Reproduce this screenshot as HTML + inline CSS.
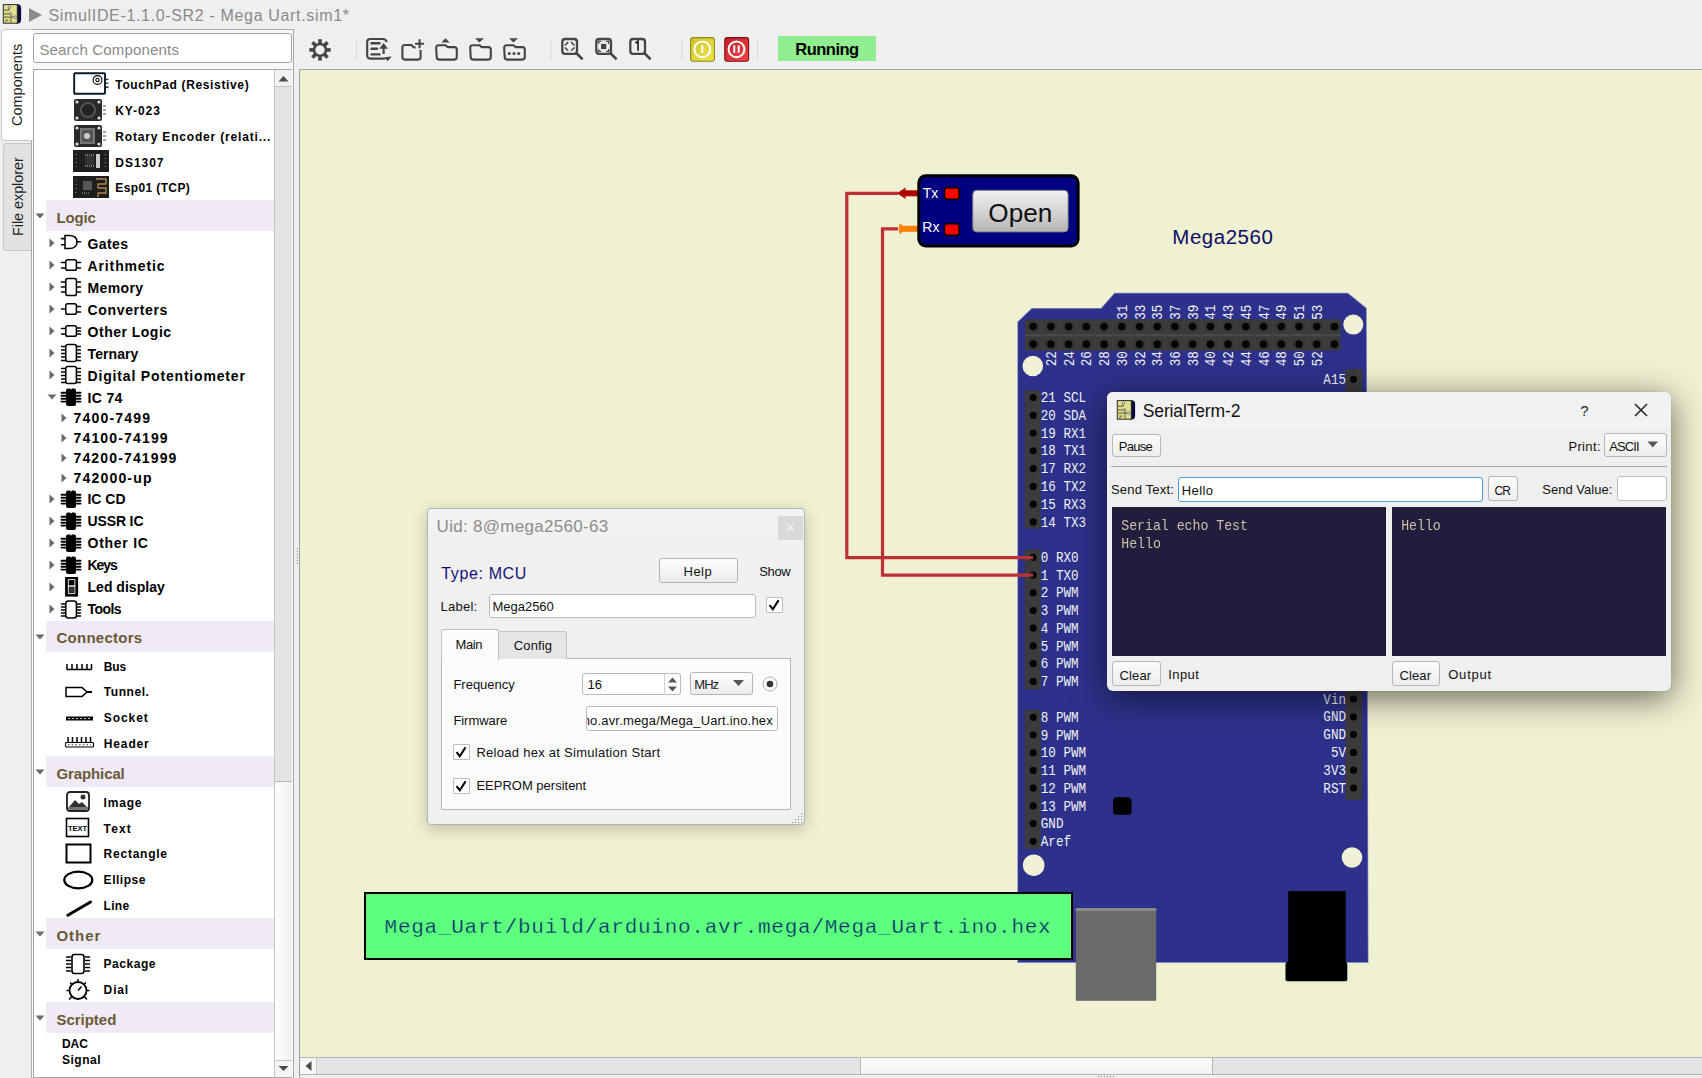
<!DOCTYPE html>
<html><head><meta charset="utf-8"><title>SimulIDE</title>
<style>
*{box-sizing:border-box;margin:0;padding:0}
html,body{width:1702px;height:1078px;overflow:hidden;background:#efefef;font-family:"Liberation Sans",sans-serif;color:#000}
.a{position:absolute}
.t{position:absolute;white-space:nowrap;line-height:1}
svg.a{overflow:visible}
</style></head><body>
<div class="a" style="left:0px;top:0px;width:1702px;height:29px;background:#efefef"></div>
<svg class="a" style="left:0px;top:0px;" width="24" height="26" viewBox="0 0 24 26"><path d="M16 4.2 h1.8 q3.3 0 3.3 4 v11 q0 4.3-3.3 4.3 h-1.8z" fill="#0a0838"/>
<rect x="3.3" y="4.6" width="14" height="18.6" fill="#e2e08e" stroke="#2a2a2a" stroke-width="1"/>
<path d="M3.5 10.1h5.6v-3.2 M3.5 13.9h7 M3.5 17.2h11.2 M6 22.5v-2.3h2.5 M11 14v9" fill="none" stroke="#77764a" stroke-width="1.2"/>
<circle cx="9.4" cy="7" r="1.3" fill="#fff" stroke="#555" stroke-width="0.7"/><circle cx="10.7" cy="13.9" r="1.3" fill="#ddd" stroke="#555" stroke-width="0.7"/><circle cx="15" cy="17.2" r="1.3" fill="#fff" stroke="#555" stroke-width="0.7"/></svg>
<svg class="a" style="left:28px;top:7px;" width="16" height="16" viewBox="0 0 16 16"><path d="M1 1 L14 8 L1 15z" fill="#8c8c8c"/></svg>
<div class="t" style="left:48.50px;top:7.70px;font-size:16px;color:#8a8a8a;letter-spacing:0.657px;">SimulIDE-1.1.0-SR2 - Mega Uart.sim1*</div>
<div class="a" style="left:31px;top:29px;width:263px;height:1049px;border:1px solid #a9a9a9;border-bottom:none;background:#f8f8f8"></div>
<div class="a" style="left:33px;top:33px;width:259px;height:30px;border:1px solid #a3a3a3;border-radius:3px;background:#fff"></div>
<div class="t" style="left:39.40px;top:41.85px;font-size:15px;color:#8a8a8a;letter-spacing:0.175px;">Search Components</div>
<div class="a" style="left:1px;top:29px;width:32px;height:112px;background:#fff;border:1px solid #c6c6c6;border-right:none;border-radius:4px 0 0 4px"></div>
<div class="t" style="left:10.07px;top:126.00px;font-size:14.5px;color:#1e1e1e;transform-origin:0 0;transform:rotate(-90deg);">Components</div>
<div class="a" style="left:3px;top:143px;width:28px;height:108px;background:#e2e2e2;border:1px solid #c6c6c6;border-right:none;border-radius:4px 0 0 4px"></div>
<div class="t" style="left:11.38px;top:236.00px;font-size:14.5px;color:#1e1e1e;transform-origin:0 0;transform:rotate(-90deg);letter-spacing:-0.083px;">File explorer</div>
<div class="a" style="left:33px;top:69px;width:259px;height:1009px;border:1px solid #a6a6a6;background:#fff"></div>
<div class="a" style="left:274px;top:70px;width:18px;height:1007px;background:#e4e4e4;border-left:1px solid #c4c4c4"></div>
<div class="a" style="left:275px;top:70px;width:17px;height:17px;background:#f2f2f2;border-bottom:1px solid #c4c4c4"></div>
<svg class="a" style="left:275px;top:70px;" width="17" height="17" viewBox="0 0 17 17"><path d="M3.5 11.5 L8.5 6 L13.5 11.5z" fill="#4a4a4a"/></svg>
<div class="a" style="left:275px;top:781px;width:17px;height:279px;background:linear-gradient(90deg,#fdfdfd,#f1f1f1);border-top:1px solid #b8b8b8"></div>
<div class="a" style="left:275px;top:1060px;width:17px;height:17px;background:#f4f4f4;border-top:1px solid #c4c4c4"></div>
<svg class="a" style="left:275px;top:1060px;" width="17" height="17" viewBox="0 0 17 17"><path d="M3.5 6 L8.5 11 L13.5 6z" fill="#4a4a4a"/></svg>
<svg class="a" style="left:296px;top:547px;" width="3" height="18" viewBox="0 0 3 18"><rect x="0.8" y="0.8" width="1.3" height="1.3" fill="#999"/><rect x="0.8" y="3.8" width="1.3" height="1.3" fill="#999"/><rect x="0.8" y="6.8" width="1.3" height="1.3" fill="#999"/><rect x="0.8" y="9.8" width="1.3" height="1.3" fill="#999"/><rect x="0.8" y="12.8" width="1.3" height="1.3" fill="#999"/><rect x="0.8" y="15.8" width="1.3" height="1.3" fill="#999"/></svg>
<div class="a" style="left:299px;top:69px;width:1403px;height:990px;background:#f0f0d2;border-top:1px solid #a0a0a0;border-left:1px solid #a0a0a0"></div>
<div class="a" style="left:299px;top:1057px;width:1403px;height:21px;background:#efefef;border-left:1px solid #a0a0a0"></div>
<div class="a" style="left:300px;top:1057px;width:1402px;height:18px;background:#e4e4e6;border-top:1px solid #b4b4b0;border-bottom:1px solid #b4b4b4"></div>
<div class="a" style="left:300px;top:1058px;width:17px;height:16px;background:#f6f6f6;border-right:1px solid #c8c8c8"></div>
<svg class="a" style="left:300px;top:1058px;" width="17" height="16" viewBox="0 0 17 16"><path d="M11.5 3 L5.5 8 L11.5 13z" fill="#4a4a4a"/></svg>
<div class="a" style="left:860px;top:1058px;width:353px;height:16px;background:linear-gradient(#fefefe,#f1f1f3);border-left:1px solid #b8b8b8;border-right:1px solid #b8b8b8"></div>
<svg class="a" style="left:1097px;top:1075px;" width="20" height="3" viewBox="0 0 20 3"><rect x="0.8" y="0.8" width="1.3" height="1.3" fill="#999"/><rect x="3.8" y="0.8" width="1.3" height="1.3" fill="#999"/><rect x="6.8" y="0.8" width="1.3" height="1.3" fill="#999"/><rect x="9.8" y="0.8" width="1.3" height="1.3" fill="#999"/><rect x="12.8" y="0.8" width="1.3" height="1.3" fill="#999"/><rect x="15.8" y="0.8" width="1.3" height="1.3" fill="#999"/></svg>
<svg class="a" style="left:73px;top:72px;" width="37" height="23" viewBox="0 0 37 23"><rect x="1.2" y="1.2" width="30.8" height="20.6" rx="0.8" fill="#fff" stroke="#0a1a2a" stroke-width="1.9"/><circle cx="24.5" cy="8" r="4.4" fill="none" stroke="#000" stroke-width="1.1"/><circle cx="24.5" cy="8" r="1.7" fill="none" stroke="#000" stroke-width="1.1"/><path d="M32.5 7.3h3M32.5 11.2h3M32.5 15.1h3" stroke="#000" stroke-width="1.1"/></svg>
<div class="t" style="left:115.30px;top:78.60px;font-size:12px;color:#000;font-weight:bold;letter-spacing:0.642px;">TouchPad (Resistive)</div>
<svg class="a" style="left:74px;top:99px;" width="33" height="22" viewBox="0 0 33 22"><rect x="0" y="0" width="28" height="22" rx="2" fill="#2a2a2a"/><circle cx="3" cy="3" r="1.6" fill="#ddd"/><circle cx="25" cy="3" r="1.6" fill="#ddd"/><circle cx="3" cy="19" r="1.6" fill="#ddd"/><circle cx="25" cy="19" r="1.6" fill="#ddd"/><circle cx="14" cy="11" r="8" fill="#555"/><circle cx="14" cy="11" r="6" fill="#222"/><path d="M29 7h3M29 11h3M29 15h3" stroke="#444" stroke-width="1"/></svg>
<div class="t" style="left:115.30px;top:104.50px;font-size:12px;color:#000;font-weight:bold;letter-spacing:0.900px;">KY-023</div>
<svg class="a" style="left:74px;top:125px;" width="33" height="22" viewBox="0 0 33 22"><rect x="0" y="0" width="28" height="22" rx="2" fill="#2a2a2a"/><circle cx="3" cy="3" r="1.6" fill="#ddd"/><circle cx="25" cy="3" r="1.6" fill="#ddd"/><circle cx="3" cy="19" r="1.6" fill="#ddd"/><circle cx="25" cy="19" r="1.6" fill="#ddd"/><rect x="6" y="3" width="15" height="16" fill="#777"/><rect x="8" y="5" width="11" height="12" fill="#555"/><circle cx="13" cy="11" r="3" fill="#ccc"/><path d="M29 7h3M29 11h3M29 15h3" stroke="#444" stroke-width="1"/></svg>
<div class="t" style="left:115.30px;top:130.50px;font-size:12px;color:#000;font-weight:bold;letter-spacing:0.817px;">Rotary Encoder (relati...</div>
<svg class="a" style="left:73px;top:150px;" width="36" height="22" viewBox="0 0 36 22"><rect x="0" y="0" width="36" height="22" fill="#1e1e1e"/><rect x="12" y="6" width="9" height="9" fill="#333"/><path d="M12 5h9M12 16h9" stroke="#ddd" stroke-width="1" stroke-dasharray="1 1"/><rect x="23" y="4" width="4" height="14" fill="#ccc"/><path d="M3 4v14M32 4v14" stroke="#888" stroke-width="1" stroke-dasharray="1 3"/></svg>
<div class="t" style="left:115.30px;top:156.50px;font-size:12px;color:#000;font-weight:bold;letter-spacing:0.960px;">DS1307</div>
<svg class="a" style="left:73px;top:176px;" width="36" height="22" viewBox="0 0 36 22"><rect x="0" y="0" width="36" height="22" fill="#1e1e1e"/><rect x="10" y="5" width="9" height="9" fill="#555"/><path d="M23 3h10v5h-8v4h8v5h-8v4" stroke="#b08a50" stroke-width="1.3" fill="none"/><path d="M3 4v14" stroke="#888" stroke-width="1" stroke-dasharray="1 3"/><path d="M9 17h8" stroke="#999" stroke-width="1.2" stroke-dasharray="1 1"/></svg>
<div class="t" style="left:115.30px;top:182.40px;font-size:12px;color:#000;font-weight:bold;letter-spacing:0.380px;">Esp01 (TCP)</div>
<div class="a" style="left:46px;top:200px;width:228px;height:31px;background:#efeaf5"></div>
<svg class="a" style="left:35px;top:213px;" width="10" height="6" viewBox="0 0 10 6"><path d="M0.5 0.5 L9.5 0.5 L5 5.5z" fill="#6a6a6a"/></svg>
<div class="t" style="left:56.50px;top:210.15px;font-size:15px;color:#6a5a38;font-weight:bold;letter-spacing:-0.175px;">Logic</div>
<svg class="a" style="left:48.5px;top:238.1px;" width="6" height="10" viewBox="0 0 6 10"><path d="M0.5 0.5 L5.5 5 L0.5 9.5z" fill="#6a6a6a"/></svg>
<svg class="a" style="left:59px;top:235.1px;" width="24" height="14" viewBox="0 0 24 14"><path d="M2.5 3.6h3.5M2.5 9.8h3.5" stroke="#000" stroke-width="1.6" stroke-linecap="round"/><path d="M6 0.5 h4 q8 0 8 6.5 q0 6.5-8 6.5 h-4z" fill="#fff" stroke="#000" stroke-width="1.5"/><path d="M18 6.8h3.5" stroke="#000" stroke-width="1.6" stroke-linecap="round"/></svg>
<div class="t" style="left:87.60px;top:236.80px;font-size:14px;color:#000;font-weight:bold;letter-spacing:0.375px;">Gates</div>
<svg class="a" style="left:48.5px;top:260.0px;" width="6" height="10" viewBox="0 0 6 10"><path d="M0.5 0.5 L5.5 5 L0.5 9.5z" fill="#6a6a6a"/></svg>
<svg class="a" style="left:59px;top:254.0px;" width="24" height="22" viewBox="0 0 24 22"><path d="M2.5 8.5h4M17.5 8.5h4" stroke="#000" stroke-width="1.6" stroke-linecap="round"/><path d="M2.5 14h4M17.5 14h4" stroke="#000" stroke-width="1.6" stroke-linecap="round"/><rect x="6.8" y="5.8" width="10.6" height="10.4" rx="1.8" fill="#fff" stroke="#000" stroke-width="1.5"/></svg>
<div class="t" style="left:87.60px;top:258.70px;font-size:14px;color:#000;font-weight:bold;letter-spacing:0.856px;">Arithmetic</div>
<svg class="a" style="left:48.5px;top:282.0px;" width="6" height="10" viewBox="0 0 6 10"><path d="M0.5 0.5 L5.5 5 L0.5 9.5z" fill="#6a6a6a"/></svg>
<svg class="a" style="left:59px;top:276.0px;" width="24" height="22" viewBox="0 0 24 22"><path d="M2.5 6h4M17.5 6h4" stroke="#000" stroke-width="1.6" stroke-linecap="round"/><path d="M2.5 11h4M17.5 11h4" stroke="#000" stroke-width="1.6" stroke-linecap="round"/><path d="M2.5 16h4M17.5 16h4" stroke="#000" stroke-width="1.6" stroke-linecap="round"/><rect x="6.8" y="2.5" width="10.6" height="17" rx="1.8" fill="#fff" stroke="#000" stroke-width="1.5"/></svg>
<div class="t" style="left:87.60px;top:280.70px;font-size:14px;color:#000;font-weight:bold;letter-spacing:0.340px;">Memory</div>
<svg class="a" style="left:48.5px;top:304.0px;" width="6" height="10" viewBox="0 0 6 10"><path d="M0.5 0.5 L5.5 5 L0.5 9.5z" fill="#6a6a6a"/></svg>
<svg class="a" style="left:59px;top:298.0px;" width="24" height="22" viewBox="0 0 24 22"><path d="M2.5 11h4M17.5 8.5h4M17.5 14h4" stroke="#000" stroke-width="1.6" stroke-linecap="round"/><rect x="6.8" y="5.8" width="10.6" height="10.4" rx="1.8" fill="#fff" stroke="#000" stroke-width="1.5"/></svg>
<div class="t" style="left:87.60px;top:302.70px;font-size:14px;color:#000;font-weight:bold;letter-spacing:0.644px;">Converters</div>
<svg class="a" style="left:48.5px;top:326.0px;" width="6" height="10" viewBox="0 0 6 10"><path d="M0.5 0.5 L5.5 5 L0.5 9.5z" fill="#6a6a6a"/></svg>
<svg class="a" style="left:59px;top:320.0px;" width="24" height="22" viewBox="0 0 24 22"><path d="M2.5 8.5h4M2.5 14h4M17.5 8h4M17.5 11h4M17.5 14h4" stroke="#000" stroke-width="1.5" stroke-linecap="round"/><rect x="6.8" y="5.8" width="10.6" height="10.4" rx="1.8" fill="#fff" stroke="#000" stroke-width="1.5"/></svg>
<div class="t" style="left:87.60px;top:324.70px;font-size:14px;color:#000;font-weight:bold;letter-spacing:0.490px;">Other Logic</div>
<svg class="a" style="left:48.5px;top:348.0px;" width="6" height="10" viewBox="0 0 6 10"><path d="M0.5 0.5 L5.5 5 L0.5 9.5z" fill="#6a6a6a"/></svg>
<svg class="a" style="left:59px;top:342.0px;" width="24" height="22" viewBox="0 0 24 22"><path d="M2.5 4.5h4M17.5 4.5h4" stroke="#000" stroke-width="1.3" stroke-linecap="round"/><path d="M2.5 8h4M17.5 8h4" stroke="#000" stroke-width="1.3" stroke-linecap="round"/><path d="M2.5 11.5h4M17.5 11.5h4" stroke="#000" stroke-width="1.3" stroke-linecap="round"/><path d="M2.5 15h4M17.5 15h4" stroke="#000" stroke-width="1.3" stroke-linecap="round"/><path d="M2.5 18.5h4M17.5 18.5h4" stroke="#000" stroke-width="1.3" stroke-linecap="round"/><rect x="6.8" y="2.5" width="10.6" height="17" rx="2" fill="#fff" stroke="#000" stroke-width="1.5"/></svg>
<div class="t" style="left:87.60px;top:346.70px;font-size:14px;color:#000;font-weight:bold;letter-spacing:0.067px;">Ternary</div>
<svg class="a" style="left:48.5px;top:370.0px;" width="6" height="10" viewBox="0 0 6 10"><path d="M0.5 0.5 L5.5 5 L0.5 9.5z" fill="#6a6a6a"/></svg>
<svg class="a" style="left:59px;top:364.0px;" width="24" height="22" viewBox="0 0 24 22"><path d="M2.5 4.5h4M17.5 4.5h4" stroke="#000" stroke-width="1.3" stroke-linecap="round"/><path d="M2.5 8h4M17.5 8h4" stroke="#000" stroke-width="1.3" stroke-linecap="round"/><path d="M2.5 11.5h4M17.5 11.5h4" stroke="#000" stroke-width="1.3" stroke-linecap="round"/><path d="M2.5 15h4M17.5 15h4" stroke="#000" stroke-width="1.3" stroke-linecap="round"/><path d="M2.5 18.5h4M17.5 18.5h4" stroke="#000" stroke-width="1.3" stroke-linecap="round"/><rect x="6.8" y="2.5" width="10.6" height="17" rx="2" fill="#fff" stroke="#000" stroke-width="1.5"/></svg>
<div class="t" style="left:87.60px;top:368.70px;font-size:14px;color:#000;font-weight:bold;letter-spacing:0.825px;">Digital Potentiometer</div>
<svg class="a" style="left:46.5px;top:394.0px;" width="10" height="6" viewBox="0 0 10 6"><path d="M0.5 0.5 L9.5 0.5 L5 5.5z" fill="#6a6a6a"/></svg>
<svg class="a" style="left:59px;top:386.0px;" width="24" height="22" viewBox="0 0 24 22"><path d="M2.5 6.8h4M17.5 6.8h4" stroke="#000" stroke-width="1.9" stroke-linecap="round"/><path d="M2.5 9.7h4M17.5 9.7h4" stroke="#000" stroke-width="1.9" stroke-linecap="round"/><path d="M2.5 12.7h4M17.5 12.7h4" stroke="#000" stroke-width="1.9" stroke-linecap="round"/><path d="M2.5 15.6h4M17.5 15.6h4" stroke="#000" stroke-width="1.9" stroke-linecap="round"/><path d="M7 4.5 q0-2 2-2 h2 l1 1.2 l1-1.2 h2 q2 0 2 2 v13.5 q0 2-2 2 h-6 q-2 0-2-2z" fill="#000"/></svg>
<div class="t" style="left:87.60px;top:390.70px;font-size:14px;color:#000;font-weight:bold;letter-spacing:0.300px;">IC 74</div>
<svg class="a" style="left:60.5px;top:412.7px;" width="6" height="10" viewBox="0 0 6 10"><path d="M0.5 0.5 L5.5 5 L0.5 9.5z" fill="#6a6a6a"/></svg>
<div class="t" style="left:73.50px;top:411.40px;font-size:14px;color:#000;font-weight:bold;letter-spacing:1.200px;">7400-7499</div>
<svg class="a" style="left:60.5px;top:432.7px;" width="6" height="10" viewBox="0 0 6 10"><path d="M0.5 0.5 L5.5 5 L0.5 9.5z" fill="#6a6a6a"/></svg>
<div class="t" style="left:73.50px;top:431.40px;font-size:14px;color:#000;font-weight:bold;letter-spacing:1.162px;">74100-74199</div>
<svg class="a" style="left:60.5px;top:452.7px;" width="6" height="10" viewBox="0 0 6 10"><path d="M0.5 0.5 L5.5 5 L0.5 9.5z" fill="#6a6a6a"/></svg>
<div class="t" style="left:73.50px;top:451.40px;font-size:14px;color:#000;font-weight:bold;letter-spacing:1.145px;">74200-741999</div>
<svg class="a" style="left:60.5px;top:472.7px;" width="6" height="10" viewBox="0 0 6 10"><path d="M0.5 0.5 L5.5 5 L0.5 9.5z" fill="#6a6a6a"/></svg>
<div class="t" style="left:73.50px;top:471.40px;font-size:14px;color:#000;font-weight:bold;letter-spacing:1.190px;">742000-up</div>
<svg class="a" style="left:48.5px;top:493.7px;" width="6" height="10" viewBox="0 0 6 10"><path d="M0.5 0.5 L5.5 5 L0.5 9.5z" fill="#6a6a6a"/></svg>
<svg class="a" style="left:59px;top:487.7px;" width="24" height="22" viewBox="0 0 24 22"><path d="M2.5 6.8h4M17.5 6.8h4" stroke="#000" stroke-width="1.9" stroke-linecap="round"/><path d="M2.5 9.7h4M17.5 9.7h4" stroke="#000" stroke-width="1.9" stroke-linecap="round"/><path d="M2.5 12.7h4M17.5 12.7h4" stroke="#000" stroke-width="1.9" stroke-linecap="round"/><path d="M2.5 15.6h4M17.5 15.6h4" stroke="#000" stroke-width="1.9" stroke-linecap="round"/><path d="M7 4.5 q0-2 2-2 h2 l1 1.2 l1-1.2 h2 q2 0 2 2 v13.5 q0 2-2 2 h-6 q-2 0-2-2z" fill="#000"/></svg>
<div class="t" style="left:87.50px;top:492.40px;font-size:14px;color:#000;font-weight:bold;letter-spacing:-0.025px;">IC CD</div>
<svg class="a" style="left:48.5px;top:515.6999999999999px;" width="6" height="10" viewBox="0 0 6 10"><path d="M0.5 0.5 L5.5 5 L0.5 9.5z" fill="#6a6a6a"/></svg>
<svg class="a" style="left:59px;top:509.69999999999993px;" width="24" height="22" viewBox="0 0 24 22"><path d="M2.5 6.8h4M17.5 6.8h4" stroke="#000" stroke-width="1.9" stroke-linecap="round"/><path d="M2.5 9.7h4M17.5 9.7h4" stroke="#000" stroke-width="1.9" stroke-linecap="round"/><path d="M2.5 12.7h4M17.5 12.7h4" stroke="#000" stroke-width="1.9" stroke-linecap="round"/><path d="M2.5 15.6h4M17.5 15.6h4" stroke="#000" stroke-width="1.9" stroke-linecap="round"/><path d="M7 4.5 q0-2 2-2 h2 l1 1.2 l1-1.2 h2 q2 0 2 2 v13.5 q0 2-2 2 h-6 q-2 0-2-2z" fill="#000"/></svg>
<div class="t" style="left:87.50px;top:514.40px;font-size:14px;color:#000;font-weight:bold;letter-spacing:-0.133px;">USSR IC</div>
<svg class="a" style="left:48.5px;top:537.6999999999999px;" width="6" height="10" viewBox="0 0 6 10"><path d="M0.5 0.5 L5.5 5 L0.5 9.5z" fill="#6a6a6a"/></svg>
<svg class="a" style="left:59px;top:531.6999999999999px;" width="24" height="22" viewBox="0 0 24 22"><path d="M2.5 6.8h4M17.5 6.8h4" stroke="#000" stroke-width="1.9" stroke-linecap="round"/><path d="M2.5 9.7h4M17.5 9.7h4" stroke="#000" stroke-width="1.9" stroke-linecap="round"/><path d="M2.5 12.7h4M17.5 12.7h4" stroke="#000" stroke-width="1.9" stroke-linecap="round"/><path d="M2.5 15.6h4M17.5 15.6h4" stroke="#000" stroke-width="1.9" stroke-linecap="round"/><path d="M7 4.5 q0-2 2-2 h2 l1 1.2 l1-1.2 h2 q2 0 2 2 v13.5 q0 2-2 2 h-6 q-2 0-2-2z" fill="#000"/></svg>
<div class="t" style="left:87.50px;top:536.40px;font-size:14px;color:#000;font-weight:bold;letter-spacing:0.743px;">Other IC</div>
<svg class="a" style="left:48.5px;top:559.6999999999999px;" width="6" height="10" viewBox="0 0 6 10"><path d="M0.5 0.5 L5.5 5 L0.5 9.5z" fill="#6a6a6a"/></svg>
<svg class="a" style="left:59px;top:553.6999999999999px;" width="24" height="22" viewBox="0 0 24 22"><path d="M2.5 6.8h4M17.5 6.8h4" stroke="#000" stroke-width="1.9" stroke-linecap="round"/><path d="M2.5 9.7h4M17.5 9.7h4" stroke="#000" stroke-width="1.9" stroke-linecap="round"/><path d="M2.5 12.7h4M17.5 12.7h4" stroke="#000" stroke-width="1.9" stroke-linecap="round"/><path d="M2.5 15.6h4M17.5 15.6h4" stroke="#000" stroke-width="1.9" stroke-linecap="round"/><path d="M7 4.5 q0-2 2-2 h2 l1 1.2 l1-1.2 h2 q2 0 2 2 v13.5 q0 2-2 2 h-6 q-2 0-2-2z" fill="#000"/></svg>
<div class="t" style="left:87.50px;top:558.40px;font-size:14px;color:#000;font-weight:bold;letter-spacing:-1.033px;">Keys</div>
<svg class="a" style="left:48.5px;top:581.6999999999999px;" width="6" height="10" viewBox="0 0 6 10"><path d="M0.5 0.5 L5.5 5 L0.5 9.5z" fill="#6a6a6a"/></svg>
<svg class="a" style="left:59px;top:575.6999999999999px;" width="24" height="22" viewBox="0 0 24 22"><rect x="6.1" y="1" width="13" height="19.6" fill="#000"/><path d="M9.3 3.6h6.6v6.4h-6.6zM9.3 10h6.6v7.6h-6.6z" fill="none" stroke="#fff" stroke-width="0.9"/><rect x="10" y="11" width="5.2" height="5.8" fill="#333"/></svg>
<div class="t" style="left:87.50px;top:580.40px;font-size:14px;color:#000;font-weight:bold;letter-spacing:0.020px;">Led display</div>
<svg class="a" style="left:48.5px;top:603.6999999999999px;" width="6" height="10" viewBox="0 0 6 10"><path d="M0.5 0.5 L5.5 5 L0.5 9.5z" fill="#6a6a6a"/></svg>
<svg class="a" style="left:59px;top:597.6999999999999px;" width="24" height="22" viewBox="0 0 24 22"><path d="M2.5 6h4M17.5 6h4" stroke="#000" stroke-width="1.6" stroke-linecap="round"/><path d="M2.5 9h4M17.5 9h4" stroke="#000" stroke-width="1.6" stroke-linecap="round"/><path d="M2.5 12h4M17.5 12h4" stroke="#000" stroke-width="1.6" stroke-linecap="round"/><path d="M2.5 15h4M17.5 15h4" stroke="#000" stroke-width="1.6" stroke-linecap="round"/><path d="M2.5 18h4M17.5 18h4" stroke="#000" stroke-width="1.6" stroke-linecap="round"/><rect x="6.8" y="3" width="10.6" height="17" rx="2.5" fill="#fff" stroke="#000" stroke-width="1.5"/></svg>
<div class="t" style="left:87.50px;top:602.40px;font-size:14px;color:#000;font-weight:bold;letter-spacing:-0.575px;">Tools</div>
<div class="a" style="left:46px;top:620.5px;width:228px;height:31px;background:#efeaf5"></div>
<svg class="a" style="left:35px;top:633.5px;" width="10" height="6" viewBox="0 0 10 6"><path d="M0.5 0.5 L9.5 0.5 L5 5.5z" fill="#6a6a6a"/></svg>
<div class="t" style="left:56.50px;top:630.05px;font-size:15px;color:#6a5a38;font-weight:bold;letter-spacing:0.256px;">Connectors</div>
<svg class="a" style="left:64px;top:653.7px;" width="31" height="24" viewBox="0 0 31 24"><path d="M2.5 15.5h25M3 10v5.5M8 10v5.5M13 10v5.5M18 10v5.5M23 10v5.5M27.5 10v5.5" stroke="#000" stroke-width="1.5" fill="none"/></svg>
<div class="t" style="left:103.80px;top:660.50px;font-size:12px;color:#000;font-weight:bold;letter-spacing:-0.200px;">Bus</div>
<svg class="a" style="left:64px;top:679.6px;" width="31" height="24" viewBox="0 0 31 24"><path d="M2 7.5h16l5 4.5l-5 4.5h-16z" fill="#fff" stroke="#000" stroke-width="1.5"/><path d="M23 12h5" stroke="#000" stroke-width="2"/></svg>
<div class="t" style="left:103.80px;top:686.40px;font-size:12px;color:#000;font-weight:bold;letter-spacing:0.550px;">Tunnel.</div>
<svg class="a" style="left:64px;top:705.6px;" width="31" height="24" viewBox="0 0 31 24"><rect x="2" y="10.5" width="27" height="4" fill="#000"/><path d="M4 12.5h23" stroke="#fff" stroke-width="0.8" stroke-dasharray="2 2"/></svg>
<div class="t" style="left:103.80px;top:712.40px;font-size:12px;color:#000;font-weight:bold;letter-spacing:0.920px;">Socket</div>
<svg class="a" style="left:64px;top:731.6px;" width="31" height="24" viewBox="0 0 31 24"><path d="M4 5v6M8.5 5v6M13 5v6M17.5 5v6M22 5v6M26.5 5v6" stroke="#000" stroke-width="1.5"/><rect x="1.5" y="10.5" width="28" height="4.5" rx="1" fill="#fff" stroke="#000" stroke-width="1.1"/><path d="M4 12.8h23" stroke="#000" stroke-width="0.8" stroke-dasharray="1.5 2.2"/></svg>
<div class="t" style="left:103.80px;top:738.40px;font-size:12px;color:#000;font-weight:bold;letter-spacing:0.860px;">Header</div>
<div class="a" style="left:46px;top:756.3px;width:228px;height:31px;background:#efeaf5"></div>
<svg class="a" style="left:35px;top:769.3px;" width="10" height="6" viewBox="0 0 10 6"><path d="M0.5 0.5 L9.5 0.5 L5 5.5z" fill="#6a6a6a"/></svg>
<div class="t" style="left:56.50px;top:765.55px;font-size:15px;color:#6a5a38;font-weight:bold;letter-spacing:-0.113px;">Graphical</div>
<svg class="a" style="left:64px;top:789.8px;" width="31" height="24" viewBox="0 0 31 24"><rect x="3" y="2" width="22" height="19" rx="3" fill="#fff" stroke="#222" stroke-width="1.8"/><path d="M5 17 l6-7 l4 4 l3-2 l5 5z" fill="#333"/><circle cx="19" cy="7" r="2.5" fill="#333"/><rect x="4" y="17" width="20" height="3" fill="#777"/></svg>
<div class="t" style="left:103.60px;top:796.60px;font-size:12px;color:#000;font-weight:bold;letter-spacing:0.800px;">Image</div>
<svg class="a" style="left:64px;top:815.7px;" width="31" height="24" viewBox="0 0 31 24"><rect x="2.5" y="2.5" width="22" height="18" fill="#fff" stroke="#000" stroke-width="1.6"/><text x="13.5" y="15" font-size="7.5" font-weight="bold" text-anchor="middle" font-family="Liberation Sans">TEXT</text></svg>
<div class="t" style="left:103.60px;top:822.50px;font-size:12px;color:#000;font-weight:bold;letter-spacing:1.100px;">Text</div>
<svg class="a" style="left:64px;top:841.6px;" width="31" height="24" viewBox="0 0 31 24"><rect x="2.5" y="2.5" width="24" height="18" fill="#fff" stroke="#000" stroke-width="2"/></svg>
<div class="t" style="left:103.60px;top:848.40px;font-size:12px;color:#000;font-weight:bold;letter-spacing:0.762px;">Rectangle</div>
<svg class="a" style="left:64px;top:867.6px;" width="31" height="24" viewBox="0 0 31 24"><ellipse cx="14.3" cy="12" rx="14" ry="8.3" fill="#fff" stroke="#000" stroke-width="2.3"/></svg>
<div class="t" style="left:103.60px;top:874.40px;font-size:12px;color:#000;font-weight:bold;letter-spacing:0.533px;">Ellipse</div>
<svg class="a" style="left:64px;top:893.6px;" width="31" height="24" viewBox="0 0 31 24"><path d="M3.8 21.3 L26.5 8" stroke="#000" stroke-width="3" stroke-linecap="round"/></svg>
<div class="t" style="left:103.60px;top:900.40px;font-size:12px;color:#000;font-weight:bold;letter-spacing:0.300px;">Line</div>
<div class="a" style="left:46px;top:918.3px;width:228px;height:31px;background:#efeaf5"></div>
<svg class="a" style="left:35px;top:931.3px;" width="10" height="6" viewBox="0 0 10 6"><path d="M0.5 0.5 L9.5 0.5 L5 5.5z" fill="#6a6a6a"/></svg>
<div class="t" style="left:56.50px;top:928.25px;font-size:15px;color:#6a5a38;font-weight:bold;letter-spacing:0.950px;">Other</div>
<svg class="a" style="left:64px;top:951.5px;" width="31" height="24" viewBox="0 0 31 24"><path d="M2.5 5h4M21.5 5h4" stroke="#000" stroke-width="1.4" stroke-linecap="round"/><path d="M2.5 8.5h4M21.5 8.5h4" stroke="#000" stroke-width="1.4" stroke-linecap="round"/><path d="M2.5 12h4M21.5 12h4" stroke="#000" stroke-width="1.4" stroke-linecap="round"/><path d="M2.5 15.5h4M21.5 15.5h4" stroke="#000" stroke-width="1.4" stroke-linecap="round"/><path d="M2.5 19h4M21.5 19h4" stroke="#000" stroke-width="1.4" stroke-linecap="round"/><rect x="8" y="2.5" width="12" height="19" rx="2.5" fill="#fff" stroke="#000" stroke-width="1.6"/></svg>
<div class="t" style="left:103.60px;top:958.30px;font-size:12px;color:#000;font-weight:bold;letter-spacing:0.517px;">Package</div>
<svg class="a" style="left:64px;top:977.5px;" width="31" height="24" viewBox="0 0 31 24"><circle cx="14" cy="12.5" r="8.5" fill="#fff" stroke="#000" stroke-width="1.8"/><path d="M14 4v-3M5.5 12.5h-3M22.5 12.5h3M8 18.5l-3 3M20 18.5l3 3M8 6.5l-2-2M20 6.5l2-2M14 12.5l3.5-4" stroke="#000" stroke-width="1.5"/></svg>
<div class="t" style="left:103.60px;top:984.30px;font-size:12px;color:#000;font-weight:bold;letter-spacing:0.867px;">Dial</div>
<div class="a" style="left:46px;top:1002.4px;width:228px;height:31px;background:#efeaf5"></div>
<svg class="a" style="left:35px;top:1015.4px;" width="10" height="6" viewBox="0 0 10 6"><path d="M0.5 0.5 L9.5 0.5 L5 5.5z" fill="#6a6a6a"/></svg>
<div class="t" style="left:56.50px;top:1012.25px;font-size:15px;color:#6a5a38;font-weight:bold;letter-spacing:-0.029px;">Scripted</div>
<div class="t" style="left:62.00px;top:1037.60px;font-size:12px;color:#000;font-weight:bold;letter-spacing:-0.050px;">DAC</div>
<div class="t" style="left:62.00px;top:1054.40px;font-size:12px;color:#000;font-weight:bold;letter-spacing:0.500px;">Signal</div>
<svg class="a" style="left:300px;top:30px" width="40" height="40" viewBox="-20 -19.9 40 40"><circle r="5.95" fill="none" stroke="#454545" stroke-width="2.6"/><rect x="-1.8" y="-10.7" width="3.6" height="4.5" fill="#454545" transform="rotate(0)"/><rect x="-1.8" y="-10.7" width="3.6" height="4.5" fill="#454545" transform="rotate(45)"/><rect x="-1.8" y="-10.7" width="3.6" height="4.5" fill="#454545" transform="rotate(90)"/><rect x="-1.8" y="-10.7" width="3.6" height="4.5" fill="#454545" transform="rotate(135)"/><rect x="-1.8" y="-10.7" width="3.6" height="4.5" fill="#454545" transform="rotate(180)"/><rect x="-1.8" y="-10.7" width="3.6" height="4.5" fill="#454545" transform="rotate(225)"/><rect x="-1.8" y="-10.7" width="3.6" height="4.5" fill="#454545" transform="rotate(270)"/><rect x="-1.8" y="-10.7" width="3.6" height="4.5" fill="#454545" transform="rotate(315)"/></svg>
<svg class="a" style="left:0;top:0" width="900" height="69" viewBox="0 0 900 69"><path d="M356.5 39v20" stroke="#d8d8d8" stroke-width="1"/><path d="M551 39v20" stroke="#d8d8d8" stroke-width="1"/><path d="M682 39v20" stroke="#d8d8d8" stroke-width="1"/><path d="M757.5 39v20" stroke="#d8d8d8" stroke-width="1"/><path d="M386.8 42 q-1-3-4-3 h-12.6 q-3 0-3 3 v13.6 q0 3 3 3 h14.8" fill="none" stroke="#454545" stroke-width="2.1"/><path d="M371.5 43.3h8M371.5 48.8h5.5M371.5 54.4h8" stroke="#454545" stroke-width="2.4" stroke-linecap="round"/><path d="M383.6 54v-7" stroke="#454545" stroke-width="2.2"/><path d="M379.2 48.8 L383.6 43 L388 48.8z" fill="#454545"/><path d="M384.3 57.2 L391.8 56.4 L387.6 61.2z" fill="#454545"/><path d="M420.6 50 v7.1 q0 2.5-2.5 2.5 h-13.2 q-2.5 0-2.5-2.5 v-9.6 q0-2.5 2.5-2.5 h6.5 l2.6 2.4 h1.6" fill="none" stroke="#454545" stroke-width="2.1" stroke-linejoin="round"/><path d="M419.6 39.3v9M415.1 43.8h9" stroke="#454545" stroke-width="2.1"/><path d="M436.2 47.7 q0-2.5 2.5-2.5 h6.8 l2 1.9 h6.8 q2.5 0 2.5 2.5 v7.5 q0 2.5-2.5 2.5 h-15.1 q-2.5 0-2.5-2.5z" fill="none" stroke="#454545" stroke-width="2.1" stroke-linejoin="round"/><path d="M441.3 42.6 L445.5 38.2 L449.7 42.6z" fill="#454545"/><path d="M470.2 47.7 q0-2.5 2.5-2.5 h6.8 l2 1.9 h6.8 q2.5 0 2.5 2.5 v7.5 q0 2.5-2.5 2.5 h-15.1 q-2.5 0-2.5-2.5z" fill="none" stroke="#454545" stroke-width="2.1" stroke-linejoin="round"/><path d="M475 38.2 L484 38.2 L479.5 42.6z" fill="#454545"/><path d="M504.2 47.7 q0-2.5 2.5-2.5 h6.8 l2 1.9 h6.8 q2.5 0 2.5 2.5 v7.5 q0 2.5-2.5 2.5 h-15.1 q-2.5 0-2.5-2.5z" fill="none" stroke="#454545" stroke-width="2.1" stroke-linejoin="round"/><path d="M509 38.2 L518 38.2 L513.5 42.6z" fill="#454545"/><circle cx="509.3" cy="53.4" r="1.5" fill="#454545"/><circle cx="514" cy="53.4" r="1.5" fill="#454545"/><circle cx="518.7" cy="53.4" r="1.5" fill="#454545"/><rect x="562.3" y="39" width="14.7" height="14.9" rx="2.8" fill="none" stroke="#454545" stroke-width="2.3"/><path d="M576.3 53 L582.5999999999999 59.4" stroke="#454545" stroke-width="2.6"/><path d="M568.15 42.150000000000006 l-3.3 3.3 M571.15 42.150000000000006 l3.3 3.3 M568.15 50.75 l-3.3 -3.3 M571.15 50.75 l3.3 -3.3" stroke="#454545" stroke-width="1.5"/><rect x="596.3" y="39" width="14.7" height="14.9" rx="2.8" fill="none" stroke="#454545" stroke-width="2.3"/><path d="M610.3 53 L616.5999999999999 59.4" stroke="#454545" stroke-width="2.6"/><rect x="601.05" y="43.85" width="5.2" height="5.2" fill="#454545"/><path d="M598.65 43.95 v-2.5 h2.5 M608.65 43.95 v-2.5 h-2.5 M598.65 48.95 v2.5 h2.5 M608.65 48.95 v2.5 h-2.5" fill="none" stroke="#454545" stroke-width="1.2"/><rect x="630.3" y="39" width="14.7" height="14.9" rx="2.8" fill="none" stroke="#454545" stroke-width="2.3"/><path d="M644.3 53 L650.5999999999999 59.4" stroke="#454545" stroke-width="2.6"/><path d="M635.4499999999999 43.25 l2.6-2 v9.6" fill="none" stroke="#222" stroke-width="1.7"/><defs><linearGradient id="gy" x1="0" y1="0" x2="1" y2="1"><stop offset="0" stop-color="#cfc12a"/><stop offset="1" stop-color="#efe64a"/></linearGradient><linearGradient id="gr" x1="0" y1="0" x2="1" y2="1"><stop offset="0" stop-color="#c41d24"/><stop offset="1" stop-color="#f2474a"/></linearGradient></defs><rect x="690.6" y="37.6" width="23.8" height="23.6" rx="2.5" fill="url(#gy)" stroke="#8f8a1c" stroke-width="1.1"/><circle cx="702.3" cy="49.3" r="7.9" fill="none" stroke="#fff" stroke-width="2"/><path d="M702.3 45v8" stroke="#fff" stroke-width="2.1"/><rect x="724.8" y="37.6" width="23.8" height="23.6" rx="2.5" fill="url(#gr)" stroke="#7c0d10" stroke-width="1.1"/><circle cx="736.5" cy="49.3" r="7.9" fill="none" stroke="#fff" stroke-width="2"/><path d="M734.3 45.3v7.5M738.7 45.3v7.5" stroke="#fff" stroke-width="2"/></svg>
<div class="a" style="left:778px;top:36px;width:98px;height:25px;background:#90ee90"></div>
<div class="t" style="left:795.30px;top:40.98px;font-size:16.5px;color:#000;font-weight:bold;letter-spacing:-0.500px;">Running</div>
<div class="a" style="left:300px;top:70px;width:1402px;height:987px;overflow:hidden"><svg class="a" style="left:-300px;top:-70px" width="1702" height="1078" viewBox="0 0 1702 1078"><defs><filter id="bl" x="-5%" y="-5%" width="110%" height="110%"><feGaussianBlur stdDeviation="0.7"/></filter><linearGradient id="btn" x1="0" y1="0" x2="0" y2="1"><stop offset="0" stop-color="#f0f0f0"/><stop offset="0.5" stop-color="#d6d6d6"/><stop offset="1" stop-color="#b4b4b4"/></linearGradient><linearGradient id="shd" x1="0" y1="0" x2="0" y2="1"><stop offset="0" stop-color="#000" stop-opacity="0.28"/><stop offset="1" stop-color="#000" stop-opacity="0"/></linearGradient></defs><path d="M1017.3 321.7 L1031.7 308 L1101 308 L1114.4 292.7 L1348 292.7 L1366.8 308 L1368.5 963 L1017.3 963z" fill="#7f8fc0" filter="url(#bl)"/><path d="M1018 322 L1032 308.7 L1101.3 308.7 L1114.7 293.4 L1347.7 293.4 L1366 308.5 L1367.8 962 L1018 962z" fill="#2e318b"/><rect x="1025" y="319.3" width="315.5" height="31.2" fill="#3a3a3a"/><rect x="1025" y="334" width="315.5" height="2.4" fill="#484a48"/><rect x="1041.40" y="319.3" width="1.2" height="31.2" fill="#414141"/><circle cx="1033.20" cy="326.6" r="4.6" fill="#2e2e2e"/><circle cx="1033.20" cy="326.6" r="3.7" fill="#050505"/><circle cx="1033.20" cy="344.2" r="4.6" fill="#2e2e2e"/><circle cx="1033.20" cy="344.2" r="3.7" fill="#050505"/><rect x="1059.12" y="319.3" width="1.2" height="31.2" fill="#414141"/><circle cx="1050.92" cy="326.6" r="4.6" fill="#2e2e2e"/><circle cx="1050.92" cy="326.6" r="3.7" fill="#050505"/><circle cx="1050.92" cy="344.2" r="4.6" fill="#2e2e2e"/><circle cx="1050.92" cy="344.2" r="3.7" fill="#050505"/><rect x="1076.84" y="319.3" width="1.2" height="31.2" fill="#414141"/><circle cx="1068.64" cy="326.6" r="4.6" fill="#2e2e2e"/><circle cx="1068.64" cy="326.6" r="3.7" fill="#050505"/><circle cx="1068.64" cy="344.2" r="4.6" fill="#2e2e2e"/><circle cx="1068.64" cy="344.2" r="3.7" fill="#050505"/><rect x="1094.56" y="319.3" width="1.2" height="31.2" fill="#414141"/><circle cx="1086.36" cy="326.6" r="4.6" fill="#2e2e2e"/><circle cx="1086.36" cy="326.6" r="3.7" fill="#050505"/><circle cx="1086.36" cy="344.2" r="4.6" fill="#2e2e2e"/><circle cx="1086.36" cy="344.2" r="3.7" fill="#050505"/><rect x="1112.28" y="319.3" width="1.2" height="31.2" fill="#414141"/><circle cx="1104.08" cy="326.6" r="4.6" fill="#2e2e2e"/><circle cx="1104.08" cy="326.6" r="3.7" fill="#050505"/><circle cx="1104.08" cy="344.2" r="4.6" fill="#2e2e2e"/><circle cx="1104.08" cy="344.2" r="3.7" fill="#050505"/><rect x="1130.00" y="319.3" width="1.2" height="31.2" fill="#414141"/><circle cx="1121.80" cy="326.6" r="4.6" fill="#2e2e2e"/><circle cx="1121.80" cy="326.6" r="3.7" fill="#050505"/><circle cx="1121.80" cy="344.2" r="4.6" fill="#2e2e2e"/><circle cx="1121.80" cy="344.2" r="3.7" fill="#050505"/><rect x="1147.72" y="319.3" width="1.2" height="31.2" fill="#414141"/><circle cx="1139.52" cy="326.6" r="4.6" fill="#2e2e2e"/><circle cx="1139.52" cy="326.6" r="3.7" fill="#050505"/><circle cx="1139.52" cy="344.2" r="4.6" fill="#2e2e2e"/><circle cx="1139.52" cy="344.2" r="3.7" fill="#050505"/><rect x="1165.44" y="319.3" width="1.2" height="31.2" fill="#414141"/><circle cx="1157.24" cy="326.6" r="4.6" fill="#2e2e2e"/><circle cx="1157.24" cy="326.6" r="3.7" fill="#050505"/><circle cx="1157.24" cy="344.2" r="4.6" fill="#2e2e2e"/><circle cx="1157.24" cy="344.2" r="3.7" fill="#050505"/><rect x="1183.16" y="319.3" width="1.2" height="31.2" fill="#414141"/><circle cx="1174.96" cy="326.6" r="4.6" fill="#2e2e2e"/><circle cx="1174.96" cy="326.6" r="3.7" fill="#050505"/><circle cx="1174.96" cy="344.2" r="4.6" fill="#2e2e2e"/><circle cx="1174.96" cy="344.2" r="3.7" fill="#050505"/><rect x="1200.88" y="319.3" width="1.2" height="31.2" fill="#414141"/><circle cx="1192.68" cy="326.6" r="4.6" fill="#2e2e2e"/><circle cx="1192.68" cy="326.6" r="3.7" fill="#050505"/><circle cx="1192.68" cy="344.2" r="4.6" fill="#2e2e2e"/><circle cx="1192.68" cy="344.2" r="3.7" fill="#050505"/><rect x="1218.60" y="319.3" width="1.2" height="31.2" fill="#414141"/><circle cx="1210.40" cy="326.6" r="4.6" fill="#2e2e2e"/><circle cx="1210.40" cy="326.6" r="3.7" fill="#050505"/><circle cx="1210.40" cy="344.2" r="4.6" fill="#2e2e2e"/><circle cx="1210.40" cy="344.2" r="3.7" fill="#050505"/><rect x="1236.32" y="319.3" width="1.2" height="31.2" fill="#414141"/><circle cx="1228.12" cy="326.6" r="4.6" fill="#2e2e2e"/><circle cx="1228.12" cy="326.6" r="3.7" fill="#050505"/><circle cx="1228.12" cy="344.2" r="4.6" fill="#2e2e2e"/><circle cx="1228.12" cy="344.2" r="3.7" fill="#050505"/><rect x="1254.04" y="319.3" width="1.2" height="31.2" fill="#414141"/><circle cx="1245.84" cy="326.6" r="4.6" fill="#2e2e2e"/><circle cx="1245.84" cy="326.6" r="3.7" fill="#050505"/><circle cx="1245.84" cy="344.2" r="4.6" fill="#2e2e2e"/><circle cx="1245.84" cy="344.2" r="3.7" fill="#050505"/><rect x="1271.76" y="319.3" width="1.2" height="31.2" fill="#414141"/><circle cx="1263.56" cy="326.6" r="4.6" fill="#2e2e2e"/><circle cx="1263.56" cy="326.6" r="3.7" fill="#050505"/><circle cx="1263.56" cy="344.2" r="4.6" fill="#2e2e2e"/><circle cx="1263.56" cy="344.2" r="3.7" fill="#050505"/><rect x="1289.48" y="319.3" width="1.2" height="31.2" fill="#414141"/><circle cx="1281.28" cy="326.6" r="4.6" fill="#2e2e2e"/><circle cx="1281.28" cy="326.6" r="3.7" fill="#050505"/><circle cx="1281.28" cy="344.2" r="4.6" fill="#2e2e2e"/><circle cx="1281.28" cy="344.2" r="3.7" fill="#050505"/><rect x="1307.20" y="319.3" width="1.2" height="31.2" fill="#414141"/><circle cx="1299.00" cy="326.6" r="4.6" fill="#2e2e2e"/><circle cx="1299.00" cy="326.6" r="3.7" fill="#050505"/><circle cx="1299.00" cy="344.2" r="4.6" fill="#2e2e2e"/><circle cx="1299.00" cy="344.2" r="3.7" fill="#050505"/><rect x="1324.92" y="319.3" width="1.2" height="31.2" fill="#414141"/><circle cx="1316.72" cy="326.6" r="4.6" fill="#2e2e2e"/><circle cx="1316.72" cy="326.6" r="3.7" fill="#050505"/><circle cx="1316.72" cy="344.2" r="4.6" fill="#2e2e2e"/><circle cx="1316.72" cy="344.2" r="3.7" fill="#050505"/><circle cx="1334.44" cy="326.6" r="4.6" fill="#2e2e2e"/><circle cx="1334.44" cy="326.6" r="3.7" fill="#050505"/><circle cx="1334.44" cy="344.2" r="4.6" fill="#2e2e2e"/><circle cx="1334.44" cy="344.2" r="3.7" fill="#050505"/><text x="0" y="0" transform="translate(1055.92 366.3) rotate(-90) scale(1,1.15)" font-family="Liberation Mono" font-size="12.6" fill="#f2f2f2" text-anchor="start">22</text><text x="0" y="0" transform="translate(1073.64 366.3) rotate(-90) scale(1,1.15)" font-family="Liberation Mono" font-size="12.6" fill="#f2f2f2" text-anchor="start">24</text><text x="0" y="0" transform="translate(1091.3600000000001 366.3) rotate(-90) scale(1,1.15)" font-family="Liberation Mono" font-size="12.6" fill="#f2f2f2" text-anchor="start">26</text><text x="0" y="0" transform="translate(1109.08 366.3) rotate(-90) scale(1,1.15)" font-family="Liberation Mono" font-size="12.6" fill="#f2f2f2" text-anchor="start">28</text><text x="0" y="0" transform="translate(1126.8 366.3) rotate(-90) scale(1,1.15)" font-family="Liberation Mono" font-size="12.6" fill="#f2f2f2" text-anchor="start">30</text><text x="0" y="0" transform="translate(1144.52 366.3) rotate(-90) scale(1,1.15)" font-family="Liberation Mono" font-size="12.6" fill="#f2f2f2" text-anchor="start">32</text><text x="0" y="0" transform="translate(1162.24 366.3) rotate(-90) scale(1,1.15)" font-family="Liberation Mono" font-size="12.6" fill="#f2f2f2" text-anchor="start">34</text><text x="0" y="0" transform="translate(1179.96 366.3) rotate(-90) scale(1,1.15)" font-family="Liberation Mono" font-size="12.6" fill="#f2f2f2" text-anchor="start">36</text><text x="0" y="0" transform="translate(1197.68 366.3) rotate(-90) scale(1,1.15)" font-family="Liberation Mono" font-size="12.6" fill="#f2f2f2" text-anchor="start">38</text><text x="0" y="0" transform="translate(1215.4 366.3) rotate(-90) scale(1,1.15)" font-family="Liberation Mono" font-size="12.6" fill="#f2f2f2" text-anchor="start">40</text><text x="0" y="0" transform="translate(1233.1200000000001 366.3) rotate(-90) scale(1,1.15)" font-family="Liberation Mono" font-size="12.6" fill="#f2f2f2" text-anchor="start">42</text><text x="0" y="0" transform="translate(1250.8400000000001 366.3) rotate(-90) scale(1,1.15)" font-family="Liberation Mono" font-size="12.6" fill="#f2f2f2" text-anchor="start">44</text><text x="0" y="0" transform="translate(1268.56 366.3) rotate(-90) scale(1,1.15)" font-family="Liberation Mono" font-size="12.6" fill="#f2f2f2" text-anchor="start">46</text><text x="0" y="0" transform="translate(1286.28 366.3) rotate(-90) scale(1,1.15)" font-family="Liberation Mono" font-size="12.6" fill="#f2f2f2" text-anchor="start">48</text><text x="0" y="0" transform="translate(1304.0 366.3) rotate(-90) scale(1,1.15)" font-family="Liberation Mono" font-size="12.6" fill="#f2f2f2" text-anchor="start">50</text><text x="0" y="0" transform="translate(1321.72 366.3) rotate(-90) scale(1,1.15)" font-family="Liberation Mono" font-size="12.6" fill="#f2f2f2" text-anchor="start">52</text><text x="0" y="0" transform="translate(1126.8 319.8) rotate(-90) scale(1,1.15)" font-family="Liberation Mono" font-size="12.6" fill="#f2f2f2" text-anchor="start">31</text><text x="0" y="0" transform="translate(1144.52 319.8) rotate(-90) scale(1,1.15)" font-family="Liberation Mono" font-size="12.6" fill="#f2f2f2" text-anchor="start">33</text><text x="0" y="0" transform="translate(1162.24 319.8) rotate(-90) scale(1,1.15)" font-family="Liberation Mono" font-size="12.6" fill="#f2f2f2" text-anchor="start">35</text><text x="0" y="0" transform="translate(1179.96 319.8) rotate(-90) scale(1,1.15)" font-family="Liberation Mono" font-size="12.6" fill="#f2f2f2" text-anchor="start">37</text><text x="0" y="0" transform="translate(1197.68 319.8) rotate(-90) scale(1,1.15)" font-family="Liberation Mono" font-size="12.6" fill="#f2f2f2" text-anchor="start">39</text><text x="0" y="0" transform="translate(1215.4 319.8) rotate(-90) scale(1,1.15)" font-family="Liberation Mono" font-size="12.6" fill="#f2f2f2" text-anchor="start">41</text><text x="0" y="0" transform="translate(1233.1200000000001 319.8) rotate(-90) scale(1,1.15)" font-family="Liberation Mono" font-size="12.6" fill="#f2f2f2" text-anchor="start">43</text><text x="0" y="0" transform="translate(1250.8400000000001 319.8) rotate(-90) scale(1,1.15)" font-family="Liberation Mono" font-size="12.6" fill="#f2f2f2" text-anchor="start">45</text><text x="0" y="0" transform="translate(1268.56 319.8) rotate(-90) scale(1,1.15)" font-family="Liberation Mono" font-size="12.6" fill="#f2f2f2" text-anchor="start">47</text><text x="0" y="0" transform="translate(1286.28 319.8) rotate(-90) scale(1,1.15)" font-family="Liberation Mono" font-size="12.6" fill="#f2f2f2" text-anchor="start">49</text><text x="0" y="0" transform="translate(1304.0 319.8) rotate(-90) scale(1,1.15)" font-family="Liberation Mono" font-size="12.6" fill="#f2f2f2" text-anchor="start">51</text><text x="0" y="0" transform="translate(1321.72 319.8) rotate(-90) scale(1,1.15)" font-family="Liberation Mono" font-size="12.6" fill="#f2f2f2" text-anchor="start">53</text><circle cx="1032.8" cy="366" r="10.3" fill="#f1f1d6"/><circle cx="1353.3" cy="324.6" r="10" fill="#f1f1d6"/><circle cx="1033.7" cy="865.2" r="10.8" fill="#f1f1d6"/><circle cx="1352" cy="857.5" r="10.3" fill="#f1f1d6"/><rect x="1024.7" y="390.3" width="16" height="138.2" fill="#3b3b3b"/><circle cx="1033.2" cy="397.5" r="3.6" fill="#050505"/><text x="0" y="0" transform="translate(1040.8 402.1) scale(1,1.2)" font-family="Liberation Mono" font-size="12.6" fill="#f2f2f2" text-anchor="start">21 SCL</text><circle cx="1033.2" cy="415.28" r="3.6" fill="#050505"/><text x="0" y="0" transform="translate(1040.8 419.88) scale(1,1.2)" font-family="Liberation Mono" font-size="12.6" fill="#f2f2f2" text-anchor="start">20 SDA</text><circle cx="1033.2" cy="433.06" r="3.6" fill="#050505"/><text x="0" y="0" transform="translate(1040.8 437.66) scale(1,1.2)" font-family="Liberation Mono" font-size="12.6" fill="#f2f2f2" text-anchor="start">19 RX1</text><circle cx="1033.2" cy="450.84000000000003" r="3.6" fill="#050505"/><text x="0" y="0" transform="translate(1040.8 455.44000000000005) scale(1,1.2)" font-family="Liberation Mono" font-size="12.6" fill="#f2f2f2" text-anchor="start">18 TX1</text><circle cx="1033.2" cy="468.62" r="3.6" fill="#050505"/><text x="0" y="0" transform="translate(1040.8 473.22) scale(1,1.2)" font-family="Liberation Mono" font-size="12.6" fill="#f2f2f2" text-anchor="start">17 RX2</text><circle cx="1033.2" cy="486.4" r="3.6" fill="#050505"/><text x="0" y="0" transform="translate(1040.8 491.0) scale(1,1.2)" font-family="Liberation Mono" font-size="12.6" fill="#f2f2f2" text-anchor="start">16 TX2</text><circle cx="1033.2" cy="504.18" r="3.6" fill="#050505"/><text x="0" y="0" transform="translate(1040.8 508.78000000000003) scale(1,1.2)" font-family="Liberation Mono" font-size="12.6" fill="#f2f2f2" text-anchor="start">15 RX3</text><circle cx="1033.2" cy="521.96" r="3.6" fill="#050505"/><text x="0" y="0" transform="translate(1040.8 526.5600000000001) scale(1,1.2)" font-family="Liberation Mono" font-size="12.6" fill="#f2f2f2" text-anchor="start">14 TX3</text><rect x="1024.7" y="549.5" width="16" height="140.0" fill="#3b3b3b"/><circle cx="1033.2" cy="557.3" r="3.6" fill="#050505"/><text x="0" y="0" transform="translate(1040.8 561.9) scale(1,1.2)" font-family="Liberation Mono" font-size="12.6" fill="#f2f2f2" text-anchor="start">0 RX0</text><circle cx="1033.2" cy="575.03" r="3.6" fill="#050505"/><text x="0" y="0" transform="translate(1040.8 579.63) scale(1,1.2)" font-family="Liberation Mono" font-size="12.6" fill="#f2f2f2" text-anchor="start">1 TX0</text><circle cx="1033.2" cy="592.76" r="3.6" fill="#050505"/><text x="0" y="0" transform="translate(1040.8 597.36) scale(1,1.2)" font-family="Liberation Mono" font-size="12.6" fill="#f2f2f2" text-anchor="start">2 PWM</text><circle cx="1033.2" cy="610.49" r="3.6" fill="#050505"/><text x="0" y="0" transform="translate(1040.8 615.09) scale(1,1.2)" font-family="Liberation Mono" font-size="12.6" fill="#f2f2f2" text-anchor="start">3 PWM</text><circle cx="1033.2" cy="628.2199999999999" r="3.6" fill="#050505"/><text x="0" y="0" transform="translate(1040.8 632.8199999999999) scale(1,1.2)" font-family="Liberation Mono" font-size="12.6" fill="#f2f2f2" text-anchor="start">4 PWM</text><circle cx="1033.2" cy="645.9499999999999" r="3.6" fill="#050505"/><text x="0" y="0" transform="translate(1040.8 650.55) scale(1,1.2)" font-family="Liberation Mono" font-size="12.6" fill="#f2f2f2" text-anchor="start">5 PWM</text><circle cx="1033.2" cy="663.68" r="3.6" fill="#050505"/><text x="0" y="0" transform="translate(1040.8 668.28) scale(1,1.2)" font-family="Liberation Mono" font-size="12.6" fill="#f2f2f2" text-anchor="start">6 PWM</text><circle cx="1033.2" cy="681.41" r="3.6" fill="#050505"/><text x="0" y="0" transform="translate(1040.8 686.01) scale(1,1.2)" font-family="Liberation Mono" font-size="12.6" fill="#f2f2f2" text-anchor="start">7 PWM</text><rect x="1024.7" y="709.8" width="16" height="139.20000000000005" fill="#3b3b3b"/><circle cx="1033.2" cy="717.3" r="3.6" fill="#050505"/><text x="0" y="0" transform="translate(1040.8 721.9) scale(1,1.2)" font-family="Liberation Mono" font-size="12.6" fill="#f2f2f2" text-anchor="start">8 PWM</text><circle cx="1033.2" cy="735.02" r="3.6" fill="#050505"/><text x="0" y="0" transform="translate(1040.8 739.62) scale(1,1.2)" font-family="Liberation Mono" font-size="12.6" fill="#f2f2f2" text-anchor="start">9 PWM</text><circle cx="1033.2" cy="752.74" r="3.6" fill="#050505"/><text x="0" y="0" transform="translate(1040.8 757.34) scale(1,1.2)" font-family="Liberation Mono" font-size="12.6" fill="#f2f2f2" text-anchor="start">10 PWM</text><circle cx="1033.2" cy="770.4599999999999" r="3.6" fill="#050505"/><text x="0" y="0" transform="translate(1040.8 775.06) scale(1,1.2)" font-family="Liberation Mono" font-size="12.6" fill="#f2f2f2" text-anchor="start">11 PWM</text><circle cx="1033.2" cy="788.18" r="3.6" fill="#050505"/><text x="0" y="0" transform="translate(1040.8 792.78) scale(1,1.2)" font-family="Liberation Mono" font-size="12.6" fill="#f2f2f2" text-anchor="start">12 PWM</text><circle cx="1033.2" cy="805.9" r="3.6" fill="#050505"/><text x="0" y="0" transform="translate(1040.8 810.5) scale(1,1.2)" font-family="Liberation Mono" font-size="12.6" fill="#f2f2f2" text-anchor="start">13 PWM</text><circle cx="1033.2" cy="823.6199999999999" r="3.6" fill="#050505"/><text x="0" y="0" transform="translate(1040.8 828.2199999999999) scale(1,1.2)" font-family="Liberation Mono" font-size="12.6" fill="#f2f2f2" text-anchor="start">GND</text><circle cx="1033.2" cy="841.3399999999999" r="3.6" fill="#050505"/><text x="0" y="0" transform="translate(1040.8 845.9399999999999) scale(1,1.2)" font-family="Liberation Mono" font-size="12.6" fill="#f2f2f2" text-anchor="start">Aref</text><rect x="1345.6" y="369" width="16.5" height="431" fill="#3b3b3b"/><circle cx="1353.5" cy="379.3" r="3.6" fill="#050505"/><text x="0" y="0" transform="translate(1346 383.9) scale(1,1.2)" font-family="Liberation Mono" font-size="12.6" fill="#f2f2f2" text-anchor="end">A15</text><circle cx="1353.5" cy="699.0" r="3.6" fill="#050505"/><text x="0" y="0" transform="translate(1346 703.6) scale(1,1.2)" font-family="Liberation Mono" font-size="12.6" fill="#f2f2f2" text-anchor="end">Vin</text><circle cx="1353.5" cy="716.8" r="3.6" fill="#050505"/><text x="0" y="0" transform="translate(1346 721.4) scale(1,1.2)" font-family="Liberation Mono" font-size="12.6" fill="#f2f2f2" text-anchor="end">GND</text><circle cx="1353.5" cy="734.6" r="3.6" fill="#050505"/><text x="0" y="0" transform="translate(1346 739.2) scale(1,1.2)" font-family="Liberation Mono" font-size="12.6" fill="#f2f2f2" text-anchor="end">GND</text><circle cx="1353.5" cy="752.4" r="3.6" fill="#050505"/><text x="0" y="0" transform="translate(1346 757.0) scale(1,1.2)" font-family="Liberation Mono" font-size="12.6" fill="#f2f2f2" text-anchor="end">5V</text><circle cx="1353.5" cy="770.2" r="3.6" fill="#050505"/><text x="0" y="0" transform="translate(1346 774.8000000000001) scale(1,1.2)" font-family="Liberation Mono" font-size="12.6" fill="#f2f2f2" text-anchor="end">3V3</text><circle cx="1353.5" cy="788.0" r="3.6" fill="#050505"/><text x="0" y="0" transform="translate(1346 792.6) scale(1,1.2)" font-family="Liberation Mono" font-size="12.6" fill="#f2f2f2" text-anchor="end">RST</text><rect x="1113" y="797.2" width="18.6" height="17.5" rx="3.5" fill="#000"/><rect x="1075.8" y="908" width="80.4" height="92.8" fill="#6a6a6a"/><rect x="1075.8" y="908" width="80.4" height="3" fill="#8a8a8a"/><rect x="1288.2" y="891.2" width="57.6" height="72" fill="#000"/><rect x="1285.5" y="962" width="61.8" height="19.3" rx="2" fill="#000"/><path d="M898 193.3 H846.8 V557.6 H1017 M898 228.8 H882.5 V575.1 H1017" fill="none" stroke="#ffe9d2" stroke-width="6.5" opacity="0.75"/><path d="M898 193.3 H846.8 V557.6 H1033" fill="none" stroke="#b93336" stroke-width="3.2" stroke-linejoin="miter"/><path d="M898 228.8 H882.5 V575.1 H1033" fill="none" stroke="#b93336" stroke-width="3.2"/><path d="M904 193.3 H918" stroke="#b00000" stroke-width="6"/><path d="M897 193.3 L905.5 187.6 V199z" fill="#b00000"/><path d="M899 228.8 H918" stroke="#ff8000" stroke-width="6"/><path d="M899.5 223.2 L906.5 228.8 L899.5 234.4z" fill="#ff8000"/><rect x="918.8" y="175.7" width="159.3" height="70.2" rx="7" fill="#000080" stroke="#000" stroke-width="3"/><text x="922.8" y="197.9" font-family="Liberation Sans" font-size="14" fill="#fff">Tx</text><text x="922.3" y="232.4" font-family="Liberation Sans" font-size="14" fill="#fff">Rx</text><rect x="944.4" y="187.6" width="14.8" height="11.8" rx="3" fill="#ff0000" stroke="#000" stroke-width="1.6"/><rect x="944.4" y="223.6" width="14.8" height="11.8" rx="3" fill="#ff0000" stroke="#000" stroke-width="1.6"/><rect x="972.8" y="190.3" width="95.3" height="41.6" rx="4" fill="url(#btn)" stroke="#808080" stroke-width="1"/><text x="988.3" y="222.3" font-family="Liberation Sans" font-size="26" fill="#111" textLength="64" lengthAdjust="spacingAndGlyphs">Open</text><text x="1172.3" y="243.6" font-family="Liberation Sans" font-size="20.5" fill="#0c0c64" textLength="100.5">Mega2560</text></svg></div>
<div class="a" style="left:364.2px;top:891.5px;width:709px;height:68.5px;background:#5efe7f;border:2.6px solid #000"></div>
<div class="t" style="left:384.60px;top:917.04px;font-size:21px;color:#002a68;font-family:'Liberation Mono',monospace;letter-spacing:0.735px;-webkit-text-stroke:0.3px #5efe7f;">Mega_Uart/build/arduino.avr.mega/Mega_Uart.ino.hex</div>
<div class="a" style="left:426.6px;top:507.6px;width:378.5px;height:317.5px;background:#f0f0f0;border:1px solid #b4b4ac;border-radius:4px;box-shadow:0 4px 16px rgba(0,0,0,0.22)"></div>
<div class="a" style="left:427.6px;top:508.6px;width:376.5px;height:37px;background:linear-gradient(#f3f3f3,#f0f0f0);border-radius:4px 4px 0 0"></div>
<div class="t" style="left:436.60px;top:517.85px;font-size:17px;color:#8d8d8d;letter-spacing:0.294px;">Uid: 8@mega2560-63</div>
<div class="a" style="left:778.2px;top:516.3px;width:24.6px;height:24.1px;background:#d9d9d9"></div>
<svg class="a" style="left:778.2px;top:516.3px;" width="25" height="24" viewBox="0 0 25 24"><path d="M9 8 l7 7 M16 8 l-7 7" stroke="#f2f2f2" stroke-width="1.3"/></svg>
<div class="t" style="left:441.30px;top:565.80px;font-size:16px;color:#12127e;letter-spacing:0.625px;">Type: MCU</div>
<div class="a" style="left:658.5px;top:558.4px;width:79px;height:25.1px;background:linear-gradient(#fdfdfd,#ececec);border:1px solid #b4b4b4;border-radius:3px"></div>
<div class="t" style="left:683.50px;top:565.35px;font-size:13px;color:#111;letter-spacing:0.500px;">Help</div>
<div class="t" style="left:759.20px;top:564.65px;font-size:13px;color:#111;letter-spacing:-0.333px;">Show</div>
<div class="t" style="left:440.50px;top:600.15px;font-size:13px;color:#111;letter-spacing:0.260px;">Label:</div>
<div class="a" style="left:489.4px;top:593.8px;width:267.1px;height:24.5px;background:#fff;border:1px solid #b9b9b9;border-radius:3px;"></div>
<div class="t" style="left:492.40px;top:600.15px;font-size:13px;color:#111;">Mega2560</div>
<div class="a" style="left:766.3px;top:597.4px;width:16.5px;height:16px;background:#fff;border:1px solid #bdbdbd;border-radius:1px"></div><svg class="a" style="left:766.3px;top:597.4px;" width="16.5" height="16" viewBox="0 0 16.5 16"><path d="M3.6 8.2 L6.8 12.3 L12.6 3.2" fill="none" stroke="#000" stroke-width="2.1" stroke-linejoin="miter"/></svg>
<div class="a" style="left:440.5px;top:658.4px;width:350.6px;height:151.8px;background:#fbfbfb;border:1px solid #b4b4b4"></div>
<div class="a" style="left:498.4px;top:630.6px;width:69.1px;height:28.5px;background:#e6e6e6;border:1px solid #c2c2c2;border-bottom:none;border-radius:3px 3px 0 0"></div>
<div class="a" style="left:440.5px;top:628.5px;width:58px;height:31px;background:#fbfbfb;border:1px solid #c2c2c2;border-bottom:none;border-radius:3px 3px 0 0"></div>
<div class="t" style="left:455.50px;top:638.45px;font-size:13px;color:#111;letter-spacing:-0.400px;">Main</div>
<div class="t" style="left:513.80px;top:638.75px;font-size:13px;color:#111;letter-spacing:0.140px;">Config</div>
<div class="t" style="left:453.40px;top:678.15px;font-size:13px;color:#111;">Frequency</div>
<div class="a" style="left:582.4px;top:672.5px;width:98.9px;height:22.9px;background:#fff;border:1px solid #b9b9b9;border-radius:3px;"></div>
<div class="a" style="left:664.4px;top:673.5px;width:1px;height:21px;background:#d0d0d0"></div>
<svg class="a" style="left:664.4px;top:672.5px;" width="17" height="23" viewBox="0 0 17 23"><path d="M4 9.5 L8.5 4.5 L13 9.5z M4 13.5 L8.5 18.5 L13 13.5z" fill="#555"/></svg>
<div class="t" style="left:587.60px;top:678.15px;font-size:13px;color:#111;">16</div>
<div class="a" style="left:689.7px;top:672.4px;width:63.6px;height:23px;background:linear-gradient(#fdfdfd,#ececec);border:1px solid #b4b4b4;border-radius:3px"></div>
<div class="t" style="left:694.30px;top:678.15px;font-size:13px;color:#222;letter-spacing:-0.950px;">MHz</div>
<svg class="a" style="left:732px;top:679px;" width="14" height="8" viewBox="0 0 14 8"><path d="M1 1 L12 1 L6.5 7z" fill="#555"/></svg>
<svg class="a" style="left:761px;top:675px;" width="18" height="18" viewBox="0 0 18 18"><circle cx="9" cy="9" r="7" fill="#fff" stroke="#aaa" stroke-width="1"/><circle cx="9" cy="9" r="3.3" fill="#333"/></svg>
<div class="t" style="left:453.40px;top:713.95px;font-size:13px;color:#111;letter-spacing:-0.057px;">Firmware</div>
<div class="a" style="left:586.3px;top:706.3px;width:191.3px;height:25px;background:#fff;border:1px solid #b9b9b9;border-radius:3px;overflow:hidden"><div class="t" style="left:-136.32px;top:6.65px;font-size:13px;color:#111;letter-spacing:0.18px;">Mega_Uart/build/arduino.avr.mega/Mega_Uart.ino.hex</div></div>
<div class="a" style="left:453.4px;top:744.3px;width:16.5px;height:16px;background:#fff;border:1px solid #bdbdbd;border-radius:1px"></div><svg class="a" style="left:453.4px;top:744.3px;" width="16.5" height="16" viewBox="0 0 16.5 16"><path d="M3.6 8.2 L6.8 12.3 L12.6 3.2" fill="none" stroke="#000" stroke-width="2.1" stroke-linejoin="miter"/></svg>
<div class="t" style="left:476.40px;top:746.35px;font-size:13px;color:#111;letter-spacing:0.276px;">Reload hex at Simulation Start</div>
<div class="a" style="left:453.4px;top:777.5px;width:16.5px;height:16px;background:#fff;border:1px solid #bdbdbd;border-radius:1px"></div><svg class="a" style="left:453.4px;top:777.5px;" width="16.5" height="16" viewBox="0 0 16.5 16"><path d="M3.6 8.2 L6.8 12.3 L12.6 3.2" fill="none" stroke="#000" stroke-width="2.1" stroke-linejoin="miter"/></svg>
<div class="t" style="left:476.40px;top:779.45px;font-size:13px;color:#111;">EEPROM persitent</div>
<svg class="a" style="left:792px;top:811.5px;" width="11" height="12" viewBox="0 0 11 12"><rect x="9" y="1" width="1.2" height="1.2" fill="#999"/><rect x="6" y="4" width="1.2" height="1.2" fill="#999"/><rect x="9" y="4" width="1.2" height="1.2" fill="#999"/><rect x="3" y="7" width="1.2" height="1.2" fill="#999"/><rect x="6" y="7" width="1.2" height="1.2" fill="#999"/><rect x="9" y="7" width="1.2" height="1.2" fill="#999"/><rect x="0" y="10" width="1.2" height="1.2" fill="#999"/><rect x="3" y="10" width="1.2" height="1.2" fill="#999"/><rect x="6" y="10" width="1.2" height="1.2" fill="#999"/><rect x="9" y="10" width="1.2" height="1.2" fill="#999"/></svg>
<div class="a" style="left:1107px;top:392px;width:564px;height:298.6px;background:#efefef;border-radius:6px;box-shadow:0 7px 34px rgba(0,0,0,0.58),0 0 1px rgba(0,0,0,0.35)"></div>
<div class="a" style="left:1107px;top:392px;width:564px;height:36px;background:#f2f2f2;border-radius:6px 6px 0 0"></div>
<svg class="a" style="left:1114px;top:395.6px;" width="24" height="26" viewBox="0 0 24 26"><path d="M16 4.2 h1.8 q3.3 0 3.3 4 v11 q0 4.3-3.3 4.3 h-1.8z" fill="#0a0838"/>
<rect x="3.3" y="4.6" width="14" height="18.6" fill="#e2e08e" stroke="#2a2a2a" stroke-width="1"/>
<path d="M3.5 10.1h5.6v-3.2 M3.5 13.9h7 M3.5 17.2h11.2 M6 22.5v-2.3h2.5 M11 14v9" fill="none" stroke="#77764a" stroke-width="1.2"/>
<circle cx="9.4" cy="7" r="1.3" fill="#fff" stroke="#555" stroke-width="0.7"/><circle cx="10.7" cy="13.9" r="1.3" fill="#ddd" stroke="#555" stroke-width="0.7"/><circle cx="15" cy="17.2" r="1.3" fill="#fff" stroke="#555" stroke-width="0.7"/></svg>
<div class="t" style="left:1142.80px;top:402.93px;font-size:17.5px;color:#121212;letter-spacing:-0.145px;">SerialTerm-2</div>
<div class="t" style="left:1580.30px;top:402.95px;font-size:15px;color:#222;">?</div>
<svg class="a" style="left:1633px;top:402px;" width="16" height="16" viewBox="0 0 16 16"><path d="M2 2 L14 14 M14 2 L2 14" stroke="#222" stroke-width="1.5"/></svg>
<div class="a" style="left:1111.5px;top:433.5px;width:49.1px;height:23px;background:linear-gradient(#fbfbfb,#ededed);border:1px solid #b6b6b6;border-radius:3px"></div>
<div class="t" style="left:1118.70px;top:439.65px;font-size:13px;color:#111;letter-spacing:-0.675px;">Pause</div>
<div class="t" style="left:1568.40px;top:440.05px;font-size:13px;color:#111;letter-spacing:0.360px;">Print:</div>
<div class="a" style="left:1604.3px;top:433.4px;width:62.3px;height:24.1px;background:linear-gradient(#fbfbfb,#ededed);border:1px solid #b6b6b6;border-radius:3px"></div>
<div class="t" style="left:1609.30px;top:440.05px;font-size:13px;color:#111;letter-spacing:-0.900px;">ASCII</div>
<svg class="a" style="left:1647px;top:441px;" width="12" height="7" viewBox="0 0 12 7"><path d="M0.5 0.5 L11 0.5 L5.75 6.5z" fill="#555"/></svg>
<div class="a" style="left:1111px;top:466px;width:556px;height:1px;background:#a9a9a9"></div>
<div class="t" style="left:1111.00px;top:482.75px;font-size:13px;color:#111;letter-spacing:0.178px;">Send Text:</div>
<div class="a" style="left:1178.2px;top:476.5px;width:305.3px;height:25px;background:#fff;border:1.5px solid #4d9be6;border-radius:3px"></div>
<div class="t" style="left:1181.80px;top:483.75px;font-size:13px;color:#111;letter-spacing:0.400px;">Hello</div>
<div class="a" style="left:1488.4px;top:476.3px;width:29.3px;height:25.2px;background:linear-gradient(#fbfbfb,#ededed);border:1px solid #b6b6b6;border-radius:3px"></div>
<div class="t" style="left:1494.50px;top:484.50px;font-size:12px;color:#111;letter-spacing:-1.000px;">CR</div>
<div class="t" style="left:1542.20px;top:482.95px;font-size:13px;color:#111;letter-spacing:0.020px;">Send Value:</div>
<div class="a" style="left:1617.2px;top:476.3px;width:49.4px;height:25.2px;background:#fff;border:1px solid #bdbdbd;border-radius:3px"></div>
<div class="a" style="left:1112px;top:507px;width:274px;height:149px;background:#231d3d"></div>
<div class="a" style="left:1391.9px;top:507px;width:274px;height:149px;background:#231d3d"></div>
<div class="t" style="left:1121.30px;top:520.49px;font-size:13.3px;color:#c8c1a6;font-family:'Liberation Mono',monospace;letter-spacing:-0.067px;transform:scaleY(1.1);transform-origin:0 80%;">Serial echo Test</div>
<div class="t" style="left:1121.30px;top:538.49px;font-size:13.3px;color:#c8c1a6;font-family:'Liberation Mono',monospace;letter-spacing:-0.075px;transform:scaleY(1.1);transform-origin:0 80%;">Hello</div>
<div class="t" style="left:1401.20px;top:520.49px;font-size:13.3px;color:#c8c1a6;font-family:'Liberation Mono',monospace;letter-spacing:-0.075px;transform:scaleY(1.1);transform-origin:0 80%;">Hello</div>
<div class="a" style="left:1111.5px;top:661.4px;width:49.4px;height:24.7px;background:linear-gradient(#fbfbfb,#ededed);border:1px solid #b6b6b6;border-radius:3px"></div>
<div class="t" style="left:1119.50px;top:668.55px;font-size:13px;color:#111;letter-spacing:0.125px;">Clear</div>
<div class="t" style="left:1168.30px;top:668.25px;font-size:13px;color:#111;letter-spacing:0.400px;">Input</div>
<div class="a" style="left:1391.9px;top:661.4px;width:48.3px;height:24.7px;background:linear-gradient(#fbfbfb,#ededed);border:1px solid #b6b6b6;border-radius:3px"></div>
<div class="t" style="left:1399.40px;top:668.55px;font-size:13px;color:#111;letter-spacing:0.125px;">Clear</div>
<div class="t" style="left:1448.20px;top:668.25px;font-size:13px;color:#111;letter-spacing:0.800px;">Output</div>
</body></html>
